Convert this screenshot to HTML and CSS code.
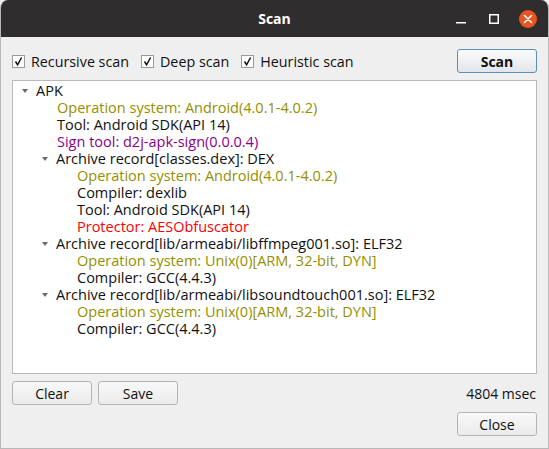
FILE: index.html
```html
<!DOCTYPE html>
<html>
<head>
<meta charset="utf-8">
<link rel="stylesheet" href="styles.css">
</head>
<body>
<div class="window">
  <div class="titlebar">
    <span class="title">Scan</span>
    <div class="controls">
      <span class="ctl min"><svg width="12" height="12" viewBox="0 0 12 12"><rect x="1" y="9" width="10" height="1.5" fill="#fff"/></svg></span>
      <span class="ctl max"><svg width="12" height="12" viewBox="0 0 12 12"><rect x="1.75" y="1.75" width="8.5" height="8.5" fill="none" stroke="#fff" stroke-width="1.5"/></svg></span>
      <span class="ctl close"><svg width="18" height="18" viewBox="0 0 18 18"><circle cx="9" cy="9" r="9" fill="#e95420"/><path d="M5.5 5.5 L12.5 12.5 M12.5 5.5 L5.5 12.5" stroke="#fff" stroke-width="1.6" stroke-linecap="round"/></svg></span>
    </div>
  </div>
  <div class="content">
    <div class="toprow">
      <label class="check"><span class="box"><svg width="11" height="11" viewBox="0 0 11 11"><path d="M2.5 5.5 L4.6 8.8 L8.6 1.5" fill="none" stroke="#111" stroke-width="1.5"/></svg></span>Recursive scan</label>
      <label class="check"><span class="box"><svg width="11" height="11" viewBox="0 0 11 11"><path d="M2.5 5.5 L4.6 8.8 L8.6 1.5" fill="none" stroke="#111" stroke-width="1.5"/></svg></span>Deep scan</label>
      <label class="check"><span class="box"><svg width="11" height="11" viewBox="0 0 11 11"><path d="M2.5 5.5 L4.6 8.8 L8.6 1.5" fill="none" stroke="#111" stroke-width="1.5"/></svg></span>Heuristic scan</label>
      <span class="spacer"></span>
      <button class="btn default">Scan</button>
    </div>
    <div class="tree">
      <div class="row l0"><span class="arrow"></span>APK</div>
      <div class="row l1 olive">Operation system: Android(4.0.1-4.0.2)</div>
      <div class="row l1">Tool: Android SDK(API 14)</div>
      <div class="row l1 purple">Sign tool: d2j-apk-sign(0.0.0.4)</div>
      <div class="row l1a"><span class="arrow"></span>Archive record[classes.dex]: DEX</div>
      <div class="row l2 olive">Operation system: Android(4.0.1-4.0.2)</div>
      <div class="row l2">Compiler: dexlib</div>
      <div class="row l2">Tool: Android SDK(API 14)</div>
      <div class="row l2 red">Protector: AESObfuscator</div>
      <div class="row l1a"><span class="arrow"></span>Archive record[lib/armeabi/libffmpeg001.so]: ELF32</div>
      <div class="row l2 olive">Operation system: Unix(0)[ARM, 32-bit, DYN]</div>
      <div class="row l2">Compiler: GCC(4.4.3)</div>
      <div class="row l1a"><span class="arrow"></span>Archive record[lib/armeabi/libsoundtouch001.so]: ELF32</div>
      <div class="row l2 olive">Operation system: Unix(0)[ARM, 32-bit, DYN]</div>
      <div class="row l2">Compiler: GCC(4.4.3)</div>
    </div>
    <div class="bottomrow">
      <button class="btn clear">Clear</button>
      <button class="btn save">Save</button>
      <span class="spacer"></span>
      <span class="time">4804 msec</span>
    </div>
    <div class="closerow">
      <button class="btn">Close</button>
    </div>
  </div>
</div>
</body>
</html>
```

FILE: styles.css
```css
html, body {
  margin: 0;
  padding: 0;
  background: #efefef;
}
body {
  font-family: "Open Sans", "Noto Sans", sans-serif;
  font-size: 14px;
  color: #111;
}
.window {
  width: 549px;
  height: 449px;
  box-sizing: border-box;
  border: 1px solid #b8b8b8;
  border-top: none;
  border-radius: 8px 8px 0 0;
  overflow: hidden;
  background: #efefef;
  display: flex;
  flex-direction: column;
}
.titlebar {
  height: 37px;
  flex: none;
  background: #2f2d2e;
  display: flex;
  align-items: center;
  justify-content: center;
  position: relative;
}
.title {
  color: #fff;
  font-weight: bold;
  font-size: 14px;
}
.controls {
  position: absolute;
  right: 11px;
  top: 10px;
  display: flex;
  align-items: center;
}
.ctl {
  display: flex;
  align-items: center;
  justify-content: center;
}
.ctl.min { width: 12px; margin-right: 21px; }
.ctl.max { width: 12px; margin-right: 19px; }
.ctl.close { width: 18px; }
.content {
  flex: 1;
  display: flex;
  flex-direction: column;
  padding: 12px 11px 12px 11px;
}
.toprow {
  display: flex;
  align-items: center;
  height: 24px;
}
.check {
  display: flex;
  align-items: center;
  margin-right: 12px;
  font-size: 14.3px;
}
.box {
  width: 13px;
  height: 13px;
  box-sizing: border-box;
  border: 1px solid #9a9a9a;
  background: #fff;
  display: flex;
  align-items: center;
  justify-content: center;
  margin-right: 6px;
}
.spacer { flex: 1; }
.btn {
  font-family: inherit;
  font-size: 14px;
  color: #111;
  height: 24px;
  width: 80px;
  box-sizing: border-box;
  border: 1px solid #b5b5b5;
  border-radius: 3px;
  background: linear-gradient(#f8f8f8, #ebebeb);
  padding: 0;
}
.btn.default {
  border-color: #5b8fb9;
  background: linear-gradient(#fbfbfb, #e2e6ea);
  font-weight: bold;
}
.tree {
  margin-top: 7px;
  height: 294px;
  box-sizing: border-box;
  border: 1px solid #b9b9b9;
  background: #fff;
  padding-top: 1px;
  font-size: 14.5px;
}
.row {
  height: 17px;
  line-height: 17px;
  white-space: nowrap;
  display: flex;
  align-items: center;
}
.l0 { padding-left: 6px; }
.l1 { padding-left: 44px; }
.l1a { padding-left: 26px; }
.l2 { padding-left: 64px; }
.arrow {
  width: 0;
  height: 0;
  border-left: 3.5px solid transparent;
  border-right: 3.5px solid transparent;
  border-top: 4px solid #6a6a6a;
  margin-left: 3px;
  margin-right: 8px;
}
.olive { color: #938f00; }
.purple { color: #8a008a; }
.red { color: #ff0000; }
.bottomrow {
  display: flex;
  align-items: center;
  margin-top: 7px;
  height: 24px;
}
.btn.clear { width: 80px; margin-right: 6px; }
.btn.save { width: 80px; }
.time { font-size: 14px; margin-right: 1px; }
.closerow {
  display: flex;
  justify-content: flex-end;
  margin-top: 7px;
}
```
